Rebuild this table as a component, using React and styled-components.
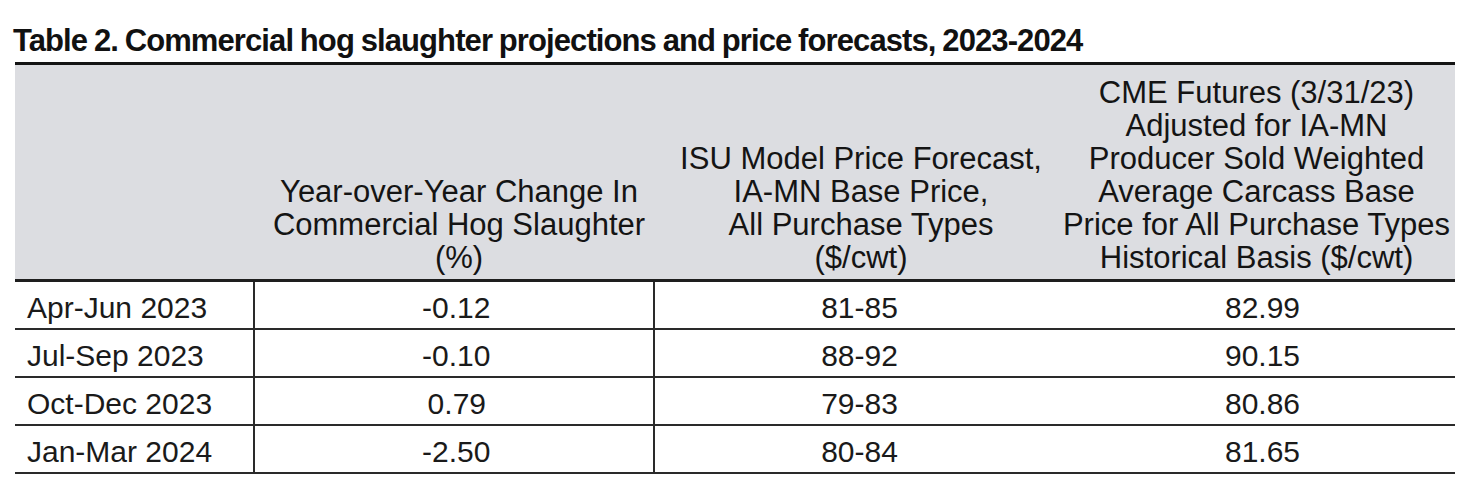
import React from 'react';
import styled, { createGlobalStyle } from 'styled-components';

const GlobalStyle = createGlobalStyle`
  body {
    margin: 0;
    background: #ffffff;
    font-family: 'Liberation Sans', Arial, sans-serif;
    color: #1a1a1a;
  }
`;

const Page = styled.div`
  padding: 23px 16px 0 13px;
`;

const Title = styled.h2`
  margin: 0 0 3px;
  font-family: 'Liberation Sans', Arial, sans-serif;
  font-weight: 700;
  font-size: 31px;
  line-height: 36px;
  letter-spacing: -0.9px;
  word-spacing: -1px;
  color: #111111;
`;

const Table = styled.table`
  margin-left: 2px;
  width: 1440px;
  table-layout: fixed;
  border-collapse: collapse;
  border-top: 3px solid #141414;
  font-size: 30px;
`;

const HeadRow = styled.tr`
  background: #dcdde1;
  border-bottom: 3px solid #1e1e1e;
`;

const HeadCell = styled.th`
  vertical-align: bottom;
  text-align: center;
  font-weight: 400;
  font-size: 31px;
  line-height: 33px;
  padding: 11px 0 5px ${(p) => p.$shift || 0}px;
  color: #141414;
`;

const Row = styled.tr`
  border-bottom: 2px solid #2a2a2a;
`;

const Cell = styled.td`
  height: 40px;
  padding: 6px 0 0 ${(p) => p.$shift || 0}px;
  line-height: 40px;
  text-align: ${(p) => (p.$left ? 'left' : 'center')};
  vertical-align: top;
  border-right: ${(p) => (p.$divider ? '2px solid #2a2a2a' : 'none')};
  color: #1a1a1a;

  &:first-child {
    padding-left: 12px;
  }
`;

const Figure = styled.span`
  display: inline-block;
  width: 64px;
  text-align: right;
`;

const rows = [
  ['Apr-Jun 2023', '-0.12', '81-85', '82.99'],
  ['Jul-Sep 2023', '-0.10', '88-92', '90.15'],
  ['Oct-Dec 2023', '0.79', '79-83', '80.86'],
  ['Jan-Mar 2024', '-2.50', '80-84', '81.65'],
];

export default function App() {
  return (
    <Page>
      <GlobalStyle />
      <Title>Table 2. Commercial hog slaughter projections and price forecasts, 2023-2024</Title>
      <Table>
        <colgroup>
          <col style={{ width: 239 }} />
          <col style={{ width: 400 }} />
          <col style={{ width: 400 }} />
          <col style={{ width: 401 }} />
        </colgroup>
        <thead>
          <HeadRow>
            <HeadCell />
            <HeadCell $shift={10}>
              Year-over-Year Change In<br />
              Commercial Hog Slaughter<br />
              (%)
            </HeadCell>
            <HeadCell $shift={14}>
              ISU Model Price Forecast,<br />
              IA-MN Base Price,<br />
              All Purchase Types<br />
              ($/cwt)
            </HeadCell>
            <HeadCell $shift={4}>
              CME Futures (3/31/23)<br />
              Adjusted for IA-MN<br />
              Producer Sold Weighted<br />
              Average Carcass Base<br />
              Price for All Purchase Types<br />
              Historical Basis ($/cwt)
            </HeadCell>
          </HeadRow>
        </thead>
        <tbody>
          {rows.map(([period, change, isu, cme]) => (
            <Row key={period}>
              <Cell $left $divider>{period}</Cell>
              <Cell $divider>
                <Figure>{change}</Figure>
              </Cell>
              <Cell $shift={10}>{isu}</Cell>
              <Cell $shift={16}>{cme}</Cell>
            </Row>
          ))}
        </tbody>
      </Table>
    </Page>
  );
}
